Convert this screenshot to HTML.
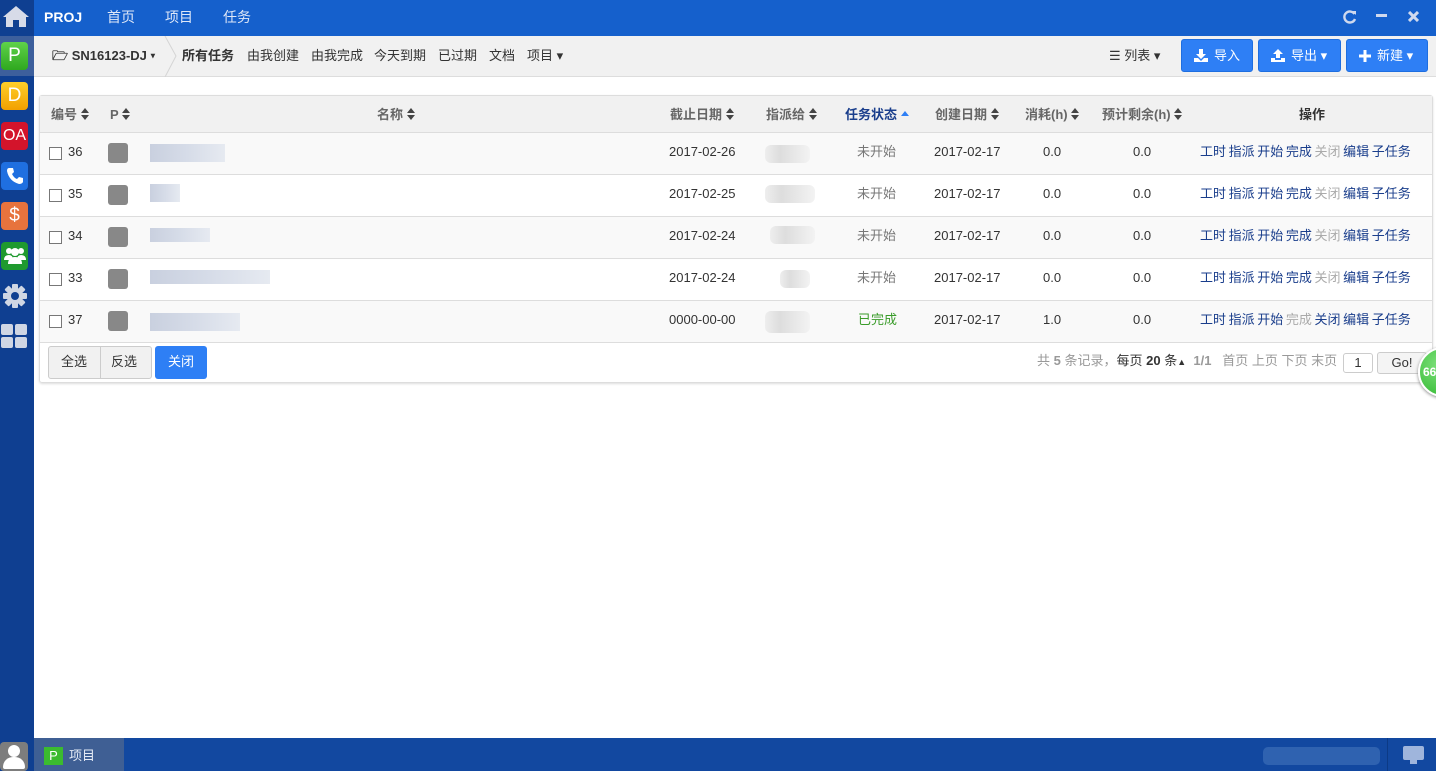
<!DOCTYPE html>
<html><head><meta charset="utf-8"><style>
*{box-sizing:border-box;margin:0;padding:0}
body{width:1436px;height:771px;overflow:hidden;background:#fff;font-family:"Liberation Sans","Noto Sans CJK SC",sans-serif;font-size:13px;line-height:16px;color:#333;position:relative}
span,b,i,div{line-height:16px}
.abs{position:absolute}
#side{left:0;top:0;width:34px;height:771px;background:#0f3f91}
.ic{position:absolute;left:1px;width:27px;height:28px;border-radius:4px;color:#fff;font-size:19px;text-align:center;line-height:28px!important}
#top{left:34px;top:0;width:1402px;height:36px;background:#1560cc;color:#fff}
#top span{position:absolute;top:9px;font-size:14px;color:#dfe8f8}
#bar{left:34px;top:36px;width:1402px;height:41px;background:#f1f1f1;border-bottom:1px solid #ddd}
#bar .t{position:absolute;top:12px;font-size:13px;color:#333}
.btn{position:absolute;top:3px;height:33px;background:#2e7ff5;border:1px solid #1e6ee0;border-radius:3px;color:#fff;font-size:13px;line-height:31px!important;padding-left:12px}
.btn svg{vertical-align:-2px;margin-right:6px}
#panel{left:39px;top:95px;width:1394px;height:288px;border:1px solid #ddd;border-radius:3px;box-shadow:0 1px 2px #ddd}
.hd{position:absolute;top:0;left:0;width:100%;height:37px;background:#f1f1f1;border-bottom:1px solid #ddd}
.hd span{position:absolute;top:11px;font-weight:bold;color:#666;font-size:13px}
.row{position:absolute;left:0;width:100%;height:42px;border-bottom:1px solid #ddd}
.row span{position:absolute;top:11px}
.cb{position:absolute;left:9px;top:14px;width:13px;height:13px;border:1px solid #777;background:#fff}
.p{position:absolute;left:68px;top:10px;width:20px;height:20px;background:#888;border-radius:3px}
.blur{position:absolute;height:14px;background:linear-gradient(90deg,#c9d0df,#d6dce8,#e6eaf1)}
.as{position:absolute;height:18px;background:linear-gradient(90deg,#eee,#ddd,#e8e8e8,#f3f3f3);border-radius:6px}
.act{position:absolute;left:1160px;top:11px;color:#1a3e8c;word-spacing:-1px}
.act i{font-style:normal;color:#aaa}
.sort{display:inline-block;vertical-align:-1px;width:9px;height:12px;position:relative}
.sort:before{content:"";position:absolute;left:0;top:0;border:4.5px solid transparent;border-bottom:5px solid #444;border-top:0}
.sort:after{content:"";position:absolute;left:0;top:7px;border:4.5px solid transparent;border-top:5px solid #444;border-bottom:0}
.up{display:inline-block;border:4.5px solid transparent;border-bottom:5px solid #2e7ff5;border-top:0;vertical-align:3px}
</style></head><body>
<div id="side" class="abs">
 <svg class="abs" style="left:2px;top:4px" width="28" height="24" viewBox="0 0 28 24"><path d="M14 2 L1 13 L4 13 L4 23 L11 23 L11 16 L17 16 L17 23 L24 23 L24 13 L27 13 Z" fill="#d7dbe8"/></svg>
 <div class="abs" style="left:0;top:36px;width:34px;height:40px;background:#3d5f9c"></div>
 <div class="ic" style="top:42px;background:linear-gradient(#5fd24a,#2fa81f)">P</div>
 <div class="ic" style="top:82px;background:linear-gradient(#ffcf2a,#f2a000)">D</div>
 <div class="ic" style="top:122px;background:#d3142b;font-size:16px">OA</div>
 <div class="ic" style="top:162px;background:#1f6fe0"><svg width="20" height="20" viewBox="0 0 20 20" style="margin-top:4px"><path d="M4 2 L8 2 L9 6 L7 8 Q9 12 12 13 L14 11 L18 12 L18 16 Q17 18 14 18 Q4 15 2 5 Q2 2 4 2Z" fill="#fff"/></svg></div>
 <div class="ic" style="top:202px;background:#e7733d">$</div>
 <div class="ic" style="top:242px;background:#1f9a2f"><svg width="22" height="20" viewBox="0 0 22 20" style="margin-top:4px"><circle cx="5" cy="5" r="3" fill="#fff"/><circle cx="17" cy="5" r="3" fill="#fff"/><circle cx="11" cy="6" r="4" fill="#fff"/><path d="M0 14 Q0 9 5 9 Q9 9 9 14Z M13 14 Q13 9 17 9 Q22 9 22 14Z M4 18 Q4 11 11 11 Q18 11 18 18Z" fill="#fff"/></svg></div>
 <svg class="abs" style="left:2px;top:283px" width="26" height="26" viewBox="0 0 26 26"><g fill="#cfd6e4"><circle cx="13" cy="13" r="8"/><rect x="10" y="1" width="6" height="24" rx="1"/><rect x="1" y="10" width="24" height="6" rx="1"/><rect x="10" y="1" width="6" height="24" rx="1" transform="rotate(45 13 13)"/><rect x="10" y="1" width="6" height="24" rx="1" transform="rotate(-45 13 13)"/></g><circle cx="13" cy="13" r="4" fill="#0f3f91"/></svg>
 <div class="abs" style="left:1px;top:324px;width:12px;height:11px;background:#cfd6e4;border-radius:2px"></div>
 <div class="abs" style="left:15px;top:324px;width:12px;height:11px;background:#cfd6e4;border-radius:2px"></div>
 <div class="abs" style="left:1px;top:337px;width:12px;height:11px;background:#cfd6e4;border-radius:2px"></div>
 <div class="abs" style="left:15px;top:337px;width:12px;height:11px;background:#cfd6e4;border-radius:2px"></div>
 <div class="abs" style="left:0;top:742px;width:28px;height:29px;background:#7d7d7d;border-radius:4px"><div class="abs" style="left:8px;top:3px;width:12px;height:12px;border-radius:50%;background:#fff"></div><div class="abs" style="left:3px;top:15px;width:22px;height:12px;border-radius:10px 10px 2px 2px;background:#fff"></div></div>
</div>
<div id="top" class="abs">
 <span style="left:10px;font-weight:bold;color:#fff">PROJ</span>
 <span style="left:73px">首页</span><span style="left:131px">项目</span><span style="left:189px">任务</span>
 <svg class="abs" style="left:1309px;top:10px" width="14" height="14" viewBox="0 0 14 14"><path d="M11.5 4 A5.5 5.5 0 1 0 12 9" stroke="#cfd9ee" stroke-width="2.4" fill="none"/><path d="M9 1 L13 1 L13 5Z" fill="#cfd9ee"/></svg>
 <div class="abs" style="left:1342px;top:14px;width:11px;height:3px;background:#cfd9ee"></div>
 <svg class="abs" style="left:1374px;top:11px" width="11" height="11"><path d="M1 1 L10 10 M10 1 L1 10" stroke="#cfd9ee" stroke-width="3"/></svg>
</div>
<div id="bar" class="abs">
 <span class="t" style="left:18px;font-weight:bold">🗁 SN16123-DJ ▾</span>
 <svg class="abs" style="left:130px;top:0" width="14" height="41"><path d="M1 0 L12 20 L1 41" stroke="#d5d5d5" fill="none"/></svg>
 <span class="t" style="left:148px;font-weight:bold">所有任务</span>
 <span class="t" style="left:213px">由我创建</span><span class="t" style="left:277px">由我完成</span><span class="t" style="left:340px">今天到期</span><span class="t" style="left:404px">已过期</span><span class="t" style="left:455px">文档</span><span class="t" style="left:493px">项目 ▾</span>
 <span class="t" style="left:1075px">☰ 列表 ▾</span>
 <div class="btn" style="left:1147px;width:72px"><svg width="14" height="13" viewBox="0 0 14 13"><path d="M5 0 H9 V5 H12 L7 10 L2 5 H5Z M0 9 H4 L7 12 L10 9 H14 V13 H0Z" fill="#fff"/></svg>导入</div>
 <div class="btn" style="left:1224px;width:83px"><svg width="14" height="13" viewBox="0 0 14 13"><path d="M7 0 L12 5 H9 V9 H5 V5 H2Z M0 9 H4 V11 H10 V9 H14 V13 H0Z" fill="#fff"/></svg>导出 ▾</div>
 <div class="btn" style="left:1312px;width:82px"><svg width="12" height="12" viewBox="0 0 12 12"><path d="M4.5 0 H7.5 V4.5 H12 V7.5 H7.5 V12 H4.5 V7.5 H0 V4.5 H4.5Z" fill="#fff"/></svg>新建 ▾</div>
</div>
<div id="panel" class="abs">
 <div class="hd">
  <span style="left:11px">编号 <i class="sort"></i></span><span style="left:70px">P <i class="sort"></i></span><span style="left:337px">名称 <i class="sort"></i></span>
  <span style="left:630px">截止日期 <i class="sort"></i></span><span style="left:726px">指派给 <i class="sort"></i></span><span style="left:805px;color:#1a3e8c">任务状态 <i class="up"></i></span>
  <span style="left:895px">创建日期 <i class="sort"></i></span><span style="left:985px">消耗(h) <i class="sort"></i></span><span style="left:1062px">预计剩余(h) <i class="sort"></i></span><span style="left:1259px;color:#333">操作</span>
 </div>
 <div class="row" style="top:37px;background:#f9f9f9"><div class="cb"></div><span style="left:28px">36</span><div class="p"></div><div class="blur" style="left:110px;top:11px;width:75px;height:18px"></div><span style="left:629px">2017-02-26</span><div class="as" style="left:725px;top:12px;width:45px"></div><span style="left:817px;color:#777">未开始</span><span style="left:894px">2017-02-17</span><span style="left:1003px">0.0</span><span style="left:1093px">0.0</span><span class="act">工时 指派 开始 完成 <i>关闭</i> 编辑 子任务</span></div>
 <div class="row" style="top:79px;background:#fff"><div class="cb"></div><span style="left:28px">35</span><div class="p"></div><div class="blur" style="left:110px;top:9px;width:30px;height:18px"></div><span style="left:629px">2017-02-25</span><div class="as" style="left:725px;top:10px;width:50px"></div><span style="left:817px;color:#777">未开始</span><span style="left:894px">2017-02-17</span><span style="left:1003px">0.0</span><span style="left:1093px">0.0</span><span class="act">工时 指派 开始 完成 <i>关闭</i> 编辑 子任务</span></div>
 <div class="row" style="top:121px;background:#f9f9f9"><div class="cb"></div><span style="left:28px">34</span><div class="p"></div><div class="blur" style="left:110px;top:11px;width:60px"></div><span style="left:629px">2017-02-24</span><div class="as" style="left:730px;top:9px;width:45px"></div><span style="left:817px;color:#777">未开始</span><span style="left:894px">2017-02-17</span><span style="left:1003px">0.0</span><span style="left:1093px">0.0</span><span class="act">工时 指派 开始 完成 <i>关闭</i> 编辑 子任务</span></div>
 <div class="row" style="top:163px;background:#fff"><div class="cb"></div><span style="left:28px">33</span><div class="p"></div><div class="blur" style="left:110px;top:11px;width:120px"></div><span style="left:629px">2017-02-24</span><div class="as" style="left:740px;top:11px;width:30px"></div><span style="left:817px;color:#777">未开始</span><span style="left:894px">2017-02-17</span><span style="left:1003px">0.0</span><span style="left:1093px">0.0</span><span class="act">工时 指派 开始 完成 <i>关闭</i> 编辑 子任务</span></div>
 <div class="row" style="top:205px;background:#f9f9f9"><div class="cb"></div><span style="left:28px">37</span><div class="p"></div><div class="blur" style="left:110px;top:12px;width:90px;height:18px"></div><span style="left:629px">0000-00-00</span><div class="as" style="left:725px;top:10px;width:45px;height:22px"></div><span style="left:818px;color:#3a9c2a">已完成</span><span style="left:894px">2017-02-17</span><span style="left:1003px">1.0</span><span style="left:1093px">0.0</span><span class="act">工时 指派 开始 <i>完成</i> 关闭 编辑 子任务</span></div>
 <div class="abs" style="left:8px;top:250px;width:104px;height:33px;border:1px solid #ccc;border-radius:3px;background:#f1f1f1;font-size:13px"><span class="abs" style="left:12px;top:7px">全选</span><div class="abs" style="left:51px;top:0;width:1px;height:31px;background:#ccc"></div><span class="abs" style="left:62px;top:7px">反选</span></div>
 <div class="abs" style="left:115px;top:250px;width:52px;height:33px;border-radius:3px;background:#2e7ff5;color:#fff;text-align:center;padding-top:8px">关闭</div>
 <div class="abs" style="left:997px;top:257px;color:#999;font-size:13px;white-space:nowrap">共 <b>5</b> 条记录，<span style="color:#333">每页 <b>20</b> 条<span style="font-size:9px">▲</span></span> &nbsp;<b>1/1</b> &nbsp; 首页 上页 下页 末页</div>
 <div class="abs" style="left:1303px;top:257px;width:30px;height:20px;border:1px solid #ccc;border-radius:3px;text-align:center;padding-top:1px">1</div>
 <div class="abs" style="left:1337px;top:256px;width:50px;height:22px;border:1px solid #ccc;border-radius:3px;background:#f4f4f4;text-align:center;padding-top:2px">Go!</div>
</div>
<div class="abs" style="left:1418px;top:347px;width:50px;height:50px;border-radius:50%;background:radial-gradient(circle at 40% 35%,#7de07a,#2bb52b);border:2px solid #fff;box-shadow:0 1px 3px #888;color:#fff;font-weight:bold;font-size:12px;padding:15px 0 0 3px">66</div>
<div class="abs" style="left:34px;top:738px;width:1402px;height:33px;background:#1248a0"></div>
<div class="abs" style="left:34px;top:738px;width:90px;height:33px;background:#3f5f94"></div>
<div class="abs" style="left:44px;top:747px;width:19px;height:18px;background:#3bbb2f;color:#fff;font-size:13px;text-align:center;padding-top:1px">P</div>
<div class="abs" style="left:69px;top:748px;color:#e6ecf7;font-size:13px">项目</div>
<div class="abs" style="left:1263px;top:747px;width:117px;height:18px;background:#2f62b0;border-radius:5px"></div>
<div class="abs" style="left:1387px;top:738px;width:1px;height:33px;background:#0c3a86"></div>
<div class="abs" style="left:1403px;top:746px;width:21px;height:14px;border:2px solid #9fb5dc;border-radius:2px;background:#9fb5dc"></div>
<div class="abs" style="left:1410px;top:760px;width:7px;height:4px;background:#9fb5dc"></div>
</body></html>
